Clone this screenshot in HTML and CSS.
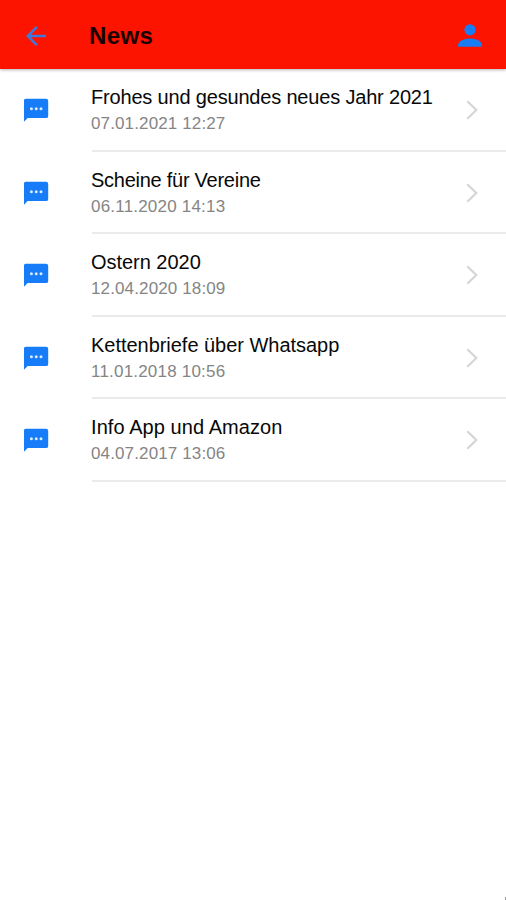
FILE: index.html
```html
<!DOCTYPE html>
<html lang="de">
<head>
<meta charset="utf-8">
<title>News</title>
<link rel="stylesheet" href="styles.css">
</head>
<body>
<svg class="defs" width="0" height="0" aria-hidden="true">
<symbol id="chat" viewBox="0 0 25 24"><path fill-rule="evenodd" d="M1.6 0.7H22Q24.2 0.7 24.2 2.9V17.9Q24.2 20.1 22 20.1H3.6L0 23.7V2.3Q0 0.7 1.6 0.7Z"/><g fill="#dcecff"><circle cx="7.4" cy="10.7" r="1.5"/><circle cx="12.2" cy="10.7" r="1.5"/><circle cx="17" cy="10.7" r="1.5"/></g></symbol>
<symbol id="chevron" viewBox="0 0 12 22"><path d="M1.3 2.2l9 8.8-9 8.8"/></symbol>
</svg>
<header class="bar">
<svg class="back" viewBox="0 0 24 24"><path d="M20 11H7.83l5.59-5.59L12 4l-8 8 8 8 1.41-1.41L7.83 13H20v-2z"/></svg>
<h1 class="title">News</h1>
<svg class="user" viewBox="0 0 24 24"><circle cx="12" cy="5.8" r="5.6"/><path d="M0 22.8v-1.4C0 16.8 6 14.4 12 14.4s12 2.4 12 7v1.4z"/></svg>
</header>
<main class="list">
<article class="item"><svg class="chat"><use href="#chat"/></svg><div class="body"><div class="text"><h2 class="name snug">Frohes und gesundes neues Jahr 2021</h2><p class="date">07.01.2021 12:27</p></div><svg class="chevron"><use href="#chevron"/></svg></div></article>
<article class="item"><svg class="chat"><use href="#chat"/></svg><div class="body"><div class="text"><h2 class="name tight">Scheine für Vereine</h2><p class="date ones">06.11.2020 14:13</p></div><svg class="chevron"><use href="#chevron"/></svg></div></article>
<article class="item"><svg class="chat"><use href="#chat"/></svg><div class="body"><div class="text"><h2 class="name">Ostern 2020</h2><p class="date">12.04.2020 18:09</p></div><svg class="chevron"><use href="#chevron"/></svg></div></article>
<article class="item"><svg class="chat"><use href="#chat"/></svg><div class="body"><div class="text"><h2 class="name">Kettenbriefe über Whatsapp</h2><p class="date ones">11.01.2018 10:56</p></div><svg class="chevron"><use href="#chevron"/></svg></div></article>
<article class="item"><svg class="chat"><use href="#chat"/></svg><div class="body"><div class="text"><h2 class="name loose">Info App und Amazon</h2><p class="date">04.07.2017 13:06</p></div><svg class="chevron"><use href="#chevron"/></svg></div></article>
</main>
<div class="corner"></div>
</body>
</html>
```
FILE: styles.css
```css
* { box-sizing: border-box; }
body { margin: 0; height: 900px; background: #fff; color: #080808; font-family: "Liberation Sans", Arial, sans-serif; display: flex; flex-direction: column; }
h1, h2, p { margin: 0; }
.defs { display: block; flex: none; }
.bar { flex: none; height: 69px; background: #fc1300; display: flex; align-items: center; padding: 2px 24px 0 21px; box-shadow: 0 1px 3px rgba(0, 0, 0, .3); }
.back, .user { flex: none; }
.back { width: 30px; height: 30px; fill: #3e78de; }
.user { width: 24px; height: 24px; margin-left: auto; fill: #197cf5; }
.title { margin-left: 38px; padding-top: 1px; font-size: 24px; line-height: 30px; font-weight: 700; letter-spacing: .4px; color: #190200; }
.item { display: flex; align-items: center; height: 82.5px; }
.chat { width: 25px; height: 24px; margin: 0 43px 0 24px; fill: #167cf8; flex: none; }
.body { flex: 1; height: 100%; display: flex; align-items: flex-start; border-bottom: 2px solid #ebebeb; }
.text { flex: 1; padding-top: 15px; margin-left: -1px; }
.name { font-size: 20px; line-height: 27px; font-weight: 400; white-space: nowrap; letter-spacing: -.03px; }
.name.snug { letter-spacing: -.18px; }
.name.tight { letter-spacing: -.26px; }
.name.loose { letter-spacing: .07px; }
.date { font-size: 17px; line-height: 26.5px; color: #858585; white-space: nowrap; letter-spacing: .13px; }
.date.ones { letter-spacing: .2px; }
.chevron { width: 12px; height: 22px; margin: 30px 28px 0 0; fill: none; stroke: #d6d6d6; stroke-width: 2.3; flex: none; }
.corner { width: 1px; height: 3px; margin: auto 0 0 auto; background: #999; }
```
